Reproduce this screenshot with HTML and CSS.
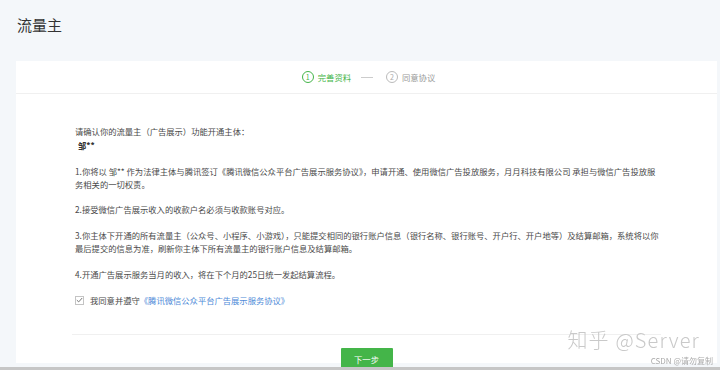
FILE: index.html
```html
<!DOCTYPE html>
<html lang="zh-CN">
<head>
  <meta charset="UTF-8" />
  <title>流量主</title>
  <link rel="stylesheet" href="styles.css">
</head>
<body>
  <h1 class="page-title">流量主</h1>

  <div class="card">
    <div class="steps">
      <span class="step active"><i class="num">1</i>完善资料</span>
      <span class="step-line"></span>
      <span class="step"><i class="num">2</i>同意协议</span>
    </div>

    <div class="card-body">
      <p class="tight">请确认你的流量主（广告展示）功能开通主体：</p>
      <p class="owner">邹**</p>
      <p>1.你将以 邹** 作为法律主体与腾讯签订《腾讯微信公众平台广告展示服务协议》，申请开通、使用微信广告投放服务，月月科技有限公司 承担与微信广告投放服务相关的一切权责。</p>
      <p>2.接受微信广告展示收入的收款户名必须与收款账号对应。</p>
      <p>3.你主体下开通的所有流量主（公众号、小程序、小游戏），只能提交相同的银行账户信息（银行名称、银行账号、开户行、开户地等）及结算邮箱，系统将以你最后提交的信息为准，刷新你主体下所有流量主的银行账户信息及结算邮箱。</p>
      <p>4.开通广告展示服务当月的收入，将在下个月的25日统一发起结算流程。</p>
      <label class="agree">
        <span class="checkbox">
          <svg width="7" height="6" viewBox="0 0 7 6"><path d="M0.8 3.1 L2.7 4.9 L6.2 1" fill="none" stroke="#777" stroke-width="1"/></svg>
        </span>
        我同意并遵守<a href="#">《腾讯微信公众平台广告展示服务协议》</a>
      </label>
    </div>

    <div class="card-foot">
      <button class="next-btn">下一步</button>
    </div>
  </div>

  <div class="watermark">知乎 @Server</div>
  <div class="watermark-small">CSDN @请勿复制</div>
  <div class="hscroll"></div>
</body>
</html>
```

FILE: styles.css
```css
html, body {
  height: 370px;
  overflow: hidden;
}

body {
  margin: 0;
  background: #f4f7fa;
  color: #4a4a4a;
  font-family: "Noto Sans CJK SC", "Noto Sans", sans-serif;
}

.page-title {
  margin: 0;
  padding: 15px 0 0 17px;
  height: 61px;
  box-sizing: border-box;
  font-size: 15px;
  line-height: 20px;
  font-weight: normal;
  color: #333;
}

.card {
  margin: 0 3px 0 16px;
  background: #fff;
  height: 302px;
}

.steps {
  height: 32px;
  border-bottom: 1px solid #f0f0f0;
  display: flex;
  align-items: center;
  justify-content: center;
  padding-left: 4px;
  font-size: 8.3px;
  color: #999;
}

.step {
  display: flex;
  align-items: center;
}

.step .num {
  display: inline-flex;
  align-items: center;
  justify-content: center;
  width: 10px;
  height: 10px;
  border: 1px solid #bbb;
  border-radius: 50%;
  margin-right: 4px;
  font-style: normal;
  font-size: 7px;
  line-height: 1;
  color: #aaa;
}

.step.active {
  color: #44b549;
}

.step.active .num {
  border-color: #44b549;
  color: #44b549;
}

.step-line {
  width: 12px;
  height: 1px;
  background: #ccc;
  margin: 0 13px 0 10px;
}

.card-body {
  padding: 31px 0 0 59px;
  width: 585px;
  font-size: 8.3px;
  line-height: 13px;
}

.card-body p {
  margin: 0 0 12.7px;
}

.card-body p.tight {
  margin-bottom: 1px;
}

.card-body .owner {
  font-weight: bold;
  padding-left: 3px;
  color: #333;
}

.agree {
  display: flex;
  align-items: center;
  margin-top: 13px;
  height: 13px;
}

.checkbox {
  display: inline-flex;
  align-items: center;
  justify-content: center;
  width: 7px;
  height: 7px;
  border: 1px solid #c4c4c4;
  margin-right: 6px;
}

.agree a {
  color: #4e8ad8;
  text-decoration: none;
}

.card-foot {
  margin: 27px 56px 0 56px;
  border-top: 1px solid #f0f0f0;
  padding-top: 13px;
  display: flex;
  justify-content: center;
}

.next-btn {
  width: 52px;
  height: 22px;
  border: none;
  border-radius: 1px;
  background: #44b549;
  color: #fff;
  font-family: inherit;
  font-size: 8.3px;
  padding: 0;
}

.watermark {
  position: fixed;
  right: 20px;
  bottom: 18px;
  font-family: "Noto Sans CJK SC", sans-serif;
  font-size: 20px;
  font-weight: 300;
  letter-spacing: 1.2px;
  line-height: 24px;
  color: #c9c9c9;
}

.watermark-small {
  position: fixed;
  right: 7px;
  bottom: 3px;
  font-size: 8px;
  line-height: 12px;
  color: #aaa;
}

.hscroll {
  position: fixed;
  left: 0;
  right: 0;
  bottom: 0;
  height: 3px;
  background: #c6c6c6;
}
```
